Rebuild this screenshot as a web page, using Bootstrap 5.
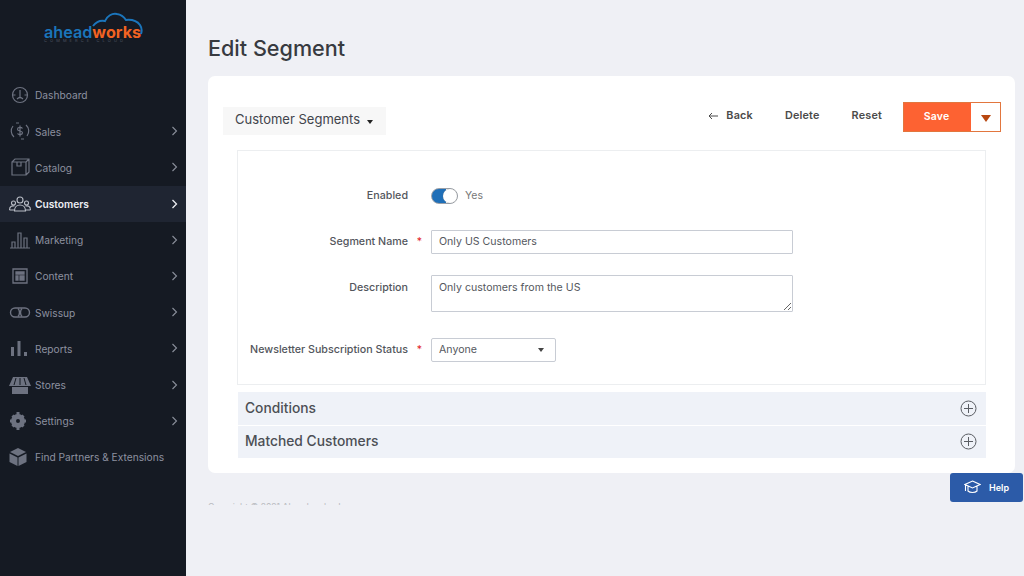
<!DOCTYPE html>
<html lang="en">
  <head>
    <meta charset="UTF-8" />
    <title>Edit Segment</title>
    <link href="https://cdn.jsdelivr.net/npm/bootstrap@5.3.0/dist/css/bootstrap.min.css" rel="stylesheet" />
    <style>
      html, body { height: 576px; overflow: hidden; }
      body { background: #eff0f5; color: #41444b; font-family: "Inter", "Liberation Sans", sans-serif; font-size: 10.5px; }
      .side-bar { width: 186px; height: 576px; background: #151a23; flex: none; }
      .logo-box { height: 77px; padding-top: 12px; }
      .logo-wrap { width: 100px; height: 34px; margin-left: 43px; position: relative; }
      .logo-cloud { position: absolute; left: 0; top: 0; }
      .logo-text { position: absolute; left: 1px; top: 13px; font-size: 16.2px; font-weight: 600; line-height: 14px; color: #1b75bb; }
      .logo-text b { color: #f26322; font-weight: 700; }
      .logo-sub { position: absolute; left: 1px; top: 27px; font-size: 4px; line-height: 4px; letter-spacing: 3.1px; color: #4d5462; white-space: nowrap; }
      .side-item { height: 36.2px; color: #8d91a0; padding-left: 8px; padding-right: 8px; text-decoration: none; }
      .side-item.on-item { background: #1f2532; color: #eceef2; font-weight: 600; }
      .side-ico { width: 24px; height: 24px; flex: none; margin-right: 3px; }
      .side-txt { flex: 1; white-space: nowrap; font-size: 10.2px; padding-top: 2px; }
      .main-area { flex: 1; padding: 0 9px 0 22px; min-width: 0; }
      .page-title { font-size: 21.6px; font-weight: 500; color: #373a40; line-height: 26px; padding-top: 35px; margin: 0 0 15px; }
      .edit-panel { background: #fff; border-radius: 7px; height: 397px; padding: 26px 15px 0; }
      .segment-btn { background: #f7f7f7; height: 28px; width: 163px; margin-top: 5px; padding: 0 0 2px 12px; font-size: 13px; color: #41444b; border: 0; border-radius: 0; }
      .segment-btn .caret-mark { border-top: 4px solid #222; border-left: 3.5px solid transparent; border-right: 3.5px solid transparent; margin-left: 7px; margin-top: 4px; }
      .act-link { font-size: 10.8px; font-weight: 600; color: #4a4a4a; text-decoration: none; letter-spacing: .2px; padding-bottom: 2px; }
      .save-group { width: 98px; height: 30px; margin-left: 21px; border: 1px solid #e2763e; margin-right: -1px; }
      .save-main { background: #fd6232; color: #fff; font-weight: 600; font-size: 10.5px; width: 67px; letter-spacing: .2px; padding-right: 2px; }
      .save-caret { border-top: 7px solid #b8470f; border-left: 5px solid transparent; border-right: 5px solid transparent; margin-top: 2px; }
      .form-box { margin: 15px 14px 0 14px; height: 235px; border: 1px solid #eceef0; padding-top: 35px; }
      .field-row { display: flex; }
      .row-switch { height: 20px; }
      .row-name { height: 24px; margin-top: 24px; }
      .row-desc { margin-top: 21px; }
      .row-news { margin-top: 26px; }
      .field-lab { width: 170px; text-align: right; font-weight: 500; color: #53565c; font-size: 10.7px; white-space: nowrap; }
      .lab-top { padding-top: 5px; }
      .req-col { width: 23px; text-align: center; color: #e22626; flex: none; }
      .txt-box { border: 1px solid #c8ccd4; border-radius: 1px; padding-left: 7px; color: #55585e; background: #fff; font-size: 10.6px; }
      .name-box { width: 362px; height: 24px; }
      .switch-pill { width: 27px; height: 16px; border-radius: 8px; background: linear-gradient(90deg, #1f6fb8 55%, #fff 55%); border: 1px solid #9aa0a8; position: relative; }
      .switch-pill::after { content: ""; position: absolute; right: 0; top: 0; width: 14px; height: 14px; border-radius: 50%; background: #fff; box-shadow: 0 0 1px #777; }
      .switch-lab { color: #777; margin-left: 7px; }
      .text-area-fake { width: 362px; height: 37px; padding-top: 4px; resize: vertical; outline: 0; display: block; }
      .select-fake { width: 125px; height: 24px; border-radius: 2px; padding-right: 11px; }
      .select-caret { border-top: 4px solid #444; border-left: 3.5px solid transparent; border-right: 3.5px solid transparent; }
      .acc-row { margin: 0 14px 0 15px; background: #eff2f8; color: #4c4f55; font-size: 13.8px; font-weight: 500; height: 33px; padding: 0 9px 0 7px; }
      .acc-first { margin-top: 7px; }
      .acc-gap { border-top: 1px solid #fff; padding-bottom: 1px; }
      .foot-peek { height: 2px; overflow: hidden; margin-top: 30px; font-size: 8.6px; line-height: 9px; color: #b8bac0; white-space: nowrap; }
      .help-tab { position: absolute; left: 950px; top: 473px; width: 73px; height: 29px; background: #2c5ba8; color: #fff; border-radius: 3px; font-weight: 600; font-size: 9px; padding-left: 14px; }
    </style>
  </head>
  <body>
    <div class="d-flex">
      <nav class="side-bar">
        <div class="logo-box">
          <div class="logo-wrap">
            <svg class="logo-cloud" width="100" height="24" viewBox="0 0 100 24" fill="none" stroke="#1b75bb" stroke-width="2">
              <path d="M50 14c3-4 7-6 12-5 2-5 7-8 12-7 4 .5 7 3 9 6 5-.5 11 1 14 5 2 3 2 6 1 9" />
            </svg>
            <div class="logo-text">ahead<b>works</b></div>
            <div class="logo-sub">COMMERCE CLOUD</div>
          </div>
        </div>
        <a class="side-item d-flex align-items-center">
          <svg class="side-ico" viewBox="0 0 24 24" fill="none" stroke="#6d7280" stroke-width="1.2"><circle cx="12" cy="12" r="7.500" /><path d="M4.500 12h3M16.500 12h3M12 7v7M9 16c2-2 4-2 6 0" /></svg>
          <span class="side-txt">Dashboard</span>
        </a>
        <a class="side-item d-flex align-items-center">
          <svg class="side-ico" viewBox="0 0 24 24" fill="none" stroke="#6d7280" stroke-width="1.2"><path d="M6 18a8 8 0 0 1-1-11M8 4h3M18 6a8 8 0 0 1 1 11M13 20h3" /><path d="M14.500 9.500c-1-1.500-5-1.500-5 .7 0 2.300 5 1.300 5 3.600 0 2.200-4 2.200-5 .7M12 6.500v11" /></svg>
          <span class="side-txt">Sales</span>
          <svg width="7" height="10" viewBox="0 0 7 10" fill="none" stroke="#8a8f9b" stroke-width="1.1"><path d="M1.500 1l4 4-4 4" /></svg>
        </a>
        <a class="side-item d-flex align-items-center">
          <svg class="side-ico" viewBox="0 0 24 24" fill="none" stroke="#6d7280" stroke-width="1.2"><path d="M4 7h14v13H4zM4 7l3-3h14v13l-3 3M18 7l3-3M9 7v4h4V7" /></svg>
          <span class="side-txt">Catalog</span>
          <svg width="7" height="10" viewBox="0 0 7 10" fill="none" stroke="#8a8f9b" stroke-width="1.1"><path d="M1.500 1l4 4-4 4" /></svg>
        </a>
        <a class="side-item on-item d-flex align-items-center">
          <svg class="side-ico" viewBox="0 0 24 24" fill="none" stroke="#b9bdc6" stroke-width="1.1"><circle cx="12" cy="8" r="3" /><circle cx="5.500" cy="11" r="2" /><circle cx="18.500" cy="11" r="2" /><path d="M6.500 19c0-8 11-8 11 0zM1.500 18c0-4 3-4.500 5-4M22.500 18c0-4-3-4.500-5-4M1.500 18h5M22.500 18h-5" /></svg>
          <span class="side-txt">Customers</span>
          <svg width="7" height="10" viewBox="0 0 7 10" fill="none" stroke="#eceef2" stroke-width="1.3"><path d="M1.500 1l4 4-4 4" /></svg>
        </a>
        <a class="side-item d-flex align-items-center">
          <svg class="side-ico" viewBox="0 0 24 24" fill="none" stroke="#6d7280" stroke-width="1.2"><path d="M2 20h20M4 20v-6h3v6M10 20V5h3v15M16 20V10h3v10" /></svg>
          <span class="side-txt">Marketing</span>
          <svg width="7" height="10" viewBox="0 0 7 10" fill="none" stroke="#8a8f9b" stroke-width="1.1"><path d="M1.500 1l4 4-4 4" /></svg>
        </a>
        <a class="side-item d-flex align-items-center">
          <svg class="side-ico" viewBox="0 0 24 24" fill="none" stroke="#6d7280" stroke-width="1.3"><path d="M5 5h14v14H5z" /><path d="M8 8h8v2H8zM8 12h2v4H8zM12 12h4v4h-4z" fill="#6d7280" /></svg>
          <span class="side-txt">Content</span>
          <svg width="7" height="10" viewBox="0 0 7 10" fill="none" stroke="#8a8f9b" stroke-width="1.1"><path d="M1.500 1l4 4-4 4" /></svg>
        </a>
        <a class="side-item d-flex align-items-center">
          <svg class="side-ico" viewBox="0 0 24 24" fill="none" stroke="#6d7280" stroke-width="1.4"><rect x="2.500" y="8" width="19" height="9" rx="4.500" /><path d="M10 8.500c2 2 2 6 0 8M14 8.500c-2 2-2 6 0 8" /></svg>
          <span class="side-txt">Swissup</span>
          <svg width="7" height="10" viewBox="0 0 7 10" fill="none" stroke="#8a8f9b" stroke-width="1.1"><path d="M1.500 1l4 4-4 4" /></svg>
        </a>
        <a class="side-item d-flex align-items-center">
          <svg class="side-ico" viewBox="0 0 24 24" fill="#6d7280"><path d="M3 11h3v9H3zM9.500 5h3v15h-3zM16 16h3v4h-3z" /></svg>
          <span class="side-txt">Reports</span>
          <svg width="7" height="10" viewBox="0 0 7 10" fill="none" stroke="#8a8f9b" stroke-width="1.1"><path d="M1.500 1l4 4-4 4" /></svg>
        </a>
        <a class="side-item d-flex align-items-center">
          <svg class="side-ico" viewBox="0 0 24 24" fill="#6d7280"><path d="M5 4h14l4 9H1zM4 14h16v7H4z" /><path d="M8 5l-2 7M12 5v7M16 5l2 7" stroke="#151a23" stroke-width="1" /></svg>
          <span class="side-txt">Stores</span>
          <svg width="7" height="10" viewBox="0 0 7 10" fill="none" stroke="#8a8f9b" stroke-width="1.1"><path d="M1.500 1l4 4-4 4" /></svg>
        </a>
        <a class="side-item d-flex align-items-center">
          <svg class="side-ico" viewBox="0 0 24 24" fill="none" stroke="#6d7280"><circle cx="10" cy="12" r="4.500" stroke-width="5" /><path d="M10 3v3M10 18v3M2 12h3M15 12h3M4.500 6.500l2 2M13.500 15.500l2 2M15.500 6.500l-2 2M6.500 15.500l-2 2" stroke-width="3" /></svg>
          <span class="side-txt">Settings</span>
          <svg width="7" height="10" viewBox="0 0 7 10" fill="none" stroke="#8a8f9b" stroke-width="1.1"><path d="M1.500 1l4 4-4 4" /></svg>
        </a>
        <a class="side-item d-flex align-items-center">
          <svg class="side-ico" viewBox="0 0 24 24" fill="#6d7280"><path d="M10 3l8 4-8 4-8-4z" /><path d="M1.500 8.500l8 4V21l-8-4zM18.500 8.500l-8 4V21l8-4z" /></svg>
          <span class="side-txt">Find Partners &amp; Extensions</span>
        </a>
      </nav>

      <main class="main-area">
        <h1 class="page-title">Edit Segment</h1>
        <div class="edit-panel">
          <div class="d-flex justify-content-between align-items-start">
            <button class="segment-btn d-flex align-items-center" type="button">Customer Segments<span class="caret-mark"></span></button>
            <div class="d-flex align-items-center">
              <a class="act-link d-flex align-items-center" href="#">
                <svg class="me-2" width="10" height="8" viewBox="0 0 10 8" fill="none" stroke="#4a4a4a"><path d="M10 4H1M4 1L1 4l3 3" /></svg>Back
              </a>
              <a class="act-link ms-4 ps-2" href="#">Delete</a>
              <a class="act-link ms-4 ps-2" href="#">Reset</a>
              <div class="save-group d-flex">
                <div class="save-main d-flex align-items-center justify-content-center">Save</div>
                <div class="flex-fill d-flex align-items-center justify-content-center"><span class="save-caret"></span></div>
              </div>
            </div>
          </div>

          <div class="form-box">
            <div class="field-row row-switch align-items-center">
              <div class="field-lab">Enabled</div>
              <div class="req-col"></div>
              <div class="switch-pill"></div>
              <span class="switch-lab">Yes</span>
            </div>
            <div class="field-row row-name align-items-center">
              <div class="field-lab">Segment Name</div>
              <div class="req-col">*</div>
              <div class="txt-box name-box d-flex align-items-center">Only US Customers</div>
            </div>
            <div class="field-row row-desc">
              <div class="field-lab lab-top">Description</div>
              <div class="req-col"></div>
              <textarea class="txt-box text-area-fake">Only customers from the US</textarea>
            </div>
            <div class="field-row row-news align-items-center">
              <div class="field-lab">Newsletter Subscription Status</div>
              <div class="req-col">*</div>
              <div class="txt-box select-fake d-flex align-items-center justify-content-between">Anyone<span class="select-caret"></span></div>
            </div>
          </div>

          <div class="acc-row acc-first d-flex align-items-center justify-content-between">
            Conditions
            <svg width="17" height="17" viewBox="0 0 17 17" fill="none" stroke="#5a5d63"><circle cx="8.500" cy="8.500" r="7.500" /><path d="M8.500 4v9M4 8.500h9" /></svg>
          </div>
          <div class="acc-row acc-gap d-flex align-items-center justify-content-between">
            Matched Customers
            <svg width="17" height="17" viewBox="0 0 17 17" fill="none" stroke="#5a5d63"><circle cx="8.500" cy="8.500" r="7.500" /><path d="M8.500 4v9M4 8.500h9" /></svg>
          </div>
        </div>
        <div class="foot-peek">Copyright © 2021 Aheadworks, Inc.</div>
      </main>
    </div>

    <div class="help-tab d-flex align-items-center">
      <svg class="me-2" width="17" height="15" viewBox="0 0 17 15" fill="none" stroke="#fff" stroke-width="1.1"><path d="M8.500 1L16 4.500 8.500 8 1 4.500zM4 6.500V11c2 2 7 2 9 0V6.500M1.500 5v6" /></svg>
      Help
    </div>
    <script src="https://cdn.jsdelivr.net/npm/bootstrap@5.3.0/dist/js/bootstrap.bundle.min.js"></script>
  </body>
</html>
